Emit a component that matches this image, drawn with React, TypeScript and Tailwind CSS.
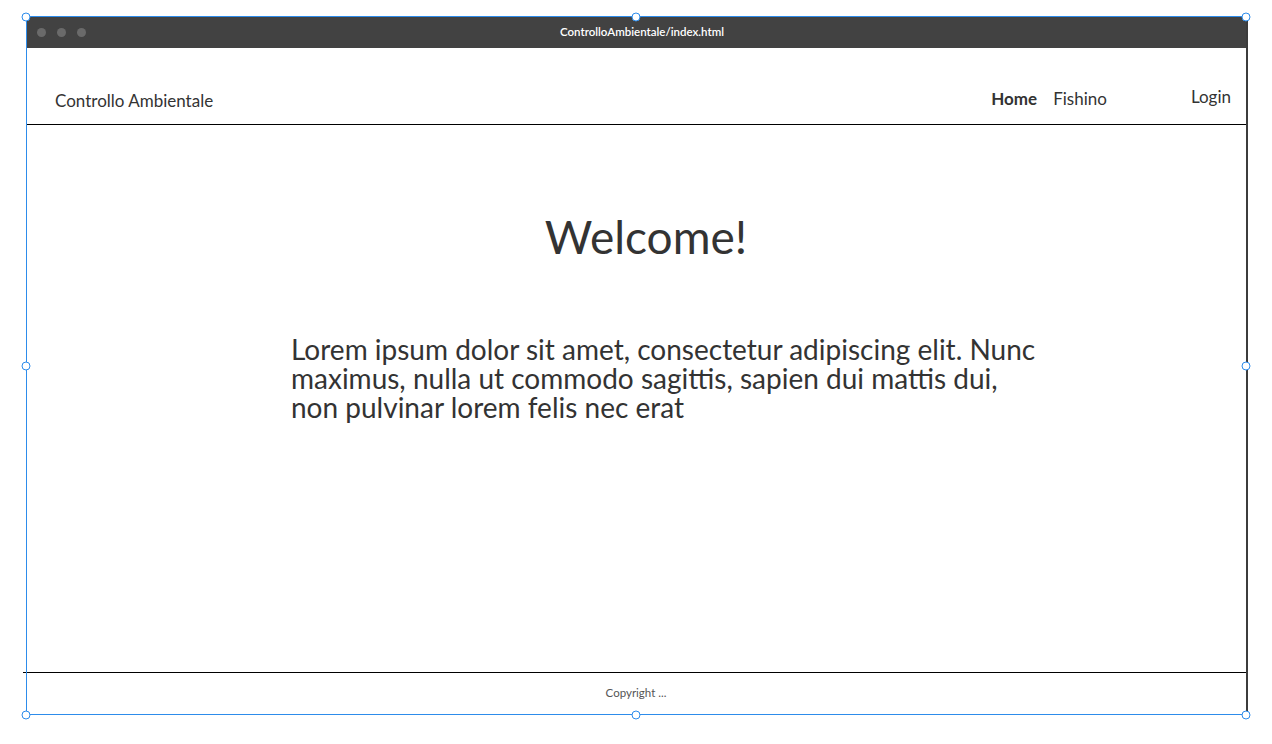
import React from "react";

const font = { fontFamily: "Lato, 'Noto Sans', sans-serif" };

function Handle({ className }: { className: string }) {
  return (
    <span
      className={
        "absolute h-[9px] w-[9px] -translate-x-1/2 -translate-y-1/2 rounded-full border border-[#2d8ceb] bg-white " +
        className
      }
    />
  );
}

export default function App() {
  return (
    <div className="h-[744px] w-[1272px] bg-white pl-[26px] pt-[16px]" style={font}>
      <div className="relative flex h-[699px] w-[1222px] flex-col border-r-2 border-r-[#3c3c3c]">
        {/* title bar */}
        <div className="relative flex h-[32px] items-center bg-[#424242]">
          <div className="flex gap-[11px] pl-[11px]">
            <span className="h-[9px] w-[9px] rounded-full bg-[#6a6a6a]" />
            <span className="h-[9px] w-[9px] rounded-full bg-[#6a6a6a]" />
            <span className="h-[9px] w-[9px] rounded-full bg-[#6a6a6a]" />
          </div>
          <div className="absolute inset-0 flex items-center justify-center pl-[12px] text-[11.5px] font-semibold text-white">
            ControlloAmbientale/index.html
          </div>
        </div>

        {/* header */}
        <header className="flex h-[77px] items-end border-b border-black pb-[11px] text-[#333]">
          <div className="pl-[29px] text-[17px]">Controllo Ambientale</div>
          <nav className="ml-auto flex items-end gap-[16px] pb-[2px] text-[17px]">
            <span className="font-bold">Home</span>
            <span>Fishino</span>
          </nav>
          <div className="ml-[84px] pb-[4px] pr-[15px] text-[17px]">Login</div>
        </header>

        {/* main */}
        <main className="flex flex-1 flex-col text-[#333]">
          <h1 className="mt-[84px] pl-[20px] text-center text-[46px] leading-[56px]">Welcome!</h1>
          <p className="ml-[265px] mt-[70px] w-[750px] text-[28px] leading-[29px]">
            Lorem ipsum dolor sit amet, consectetur adipiscing elit. Nunc maximus, nulla ut commodo
            sagittis, sapien dui mattis dui, non pulvinar lorem felis nec erat
          </p>
        </main>

        {/* footer */}
        <footer className="-ml-[3px] flex h-[43px] items-center justify-center border-t border-black pb-[2px] pl-[3px] text-[11.5px] text-[#555]">
          Copyright ...
        </footer>

        {/* selection overlay */}
        <div className="pointer-events-none absolute inset-0 -right-[1px] border-y border-l border-[#2d8ceb]" />
        <Handle className="left-0 top-[1px]" />
        <Handle className="left-1/2 top-[1px]" />
        <Handle className="left-full top-[1px]" />
        <Handle className="left-0 top-1/2" />
        <Handle className="left-full top-1/2" />
        <Handle className="left-0 top-full" />
        <Handle className="left-1/2 top-full" />
        <Handle className="left-full top-full" />
      </div>
    </div>
  );
}
